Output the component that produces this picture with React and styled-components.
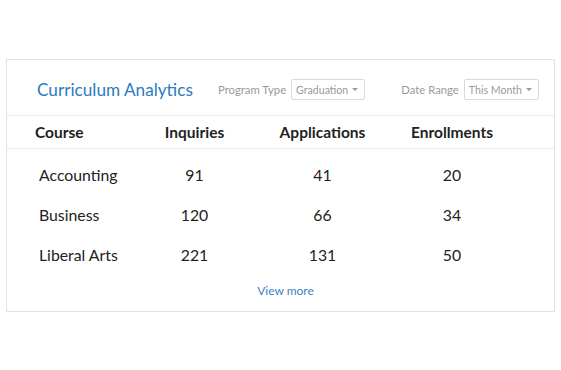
import React from 'react';
import styled, { createGlobalStyle } from 'styled-components';

const GlobalStyle = createGlobalStyle`
  html, body {
    margin: 0;
    padding: 0;
    background: #ffffff;
  }
  body {
    font-family: Lato, "Open Sans", "Liberation Sans", sans-serif;
    color: #222222;
  }
`;

const Page = styled.div`
  padding: 59px 6px 0 6px;
`;

const Card = styled.section`
  width: 547px;
  border: 1px solid #e3e3e3;
  background: #ffffff;
`;

const Header = styled.header`
  display: flex;
  align-items: center;
  height: 56px;
  padding: 4px 0 0 30px;
  box-sizing: border-box;
  border-bottom: 1px solid #ebebeb;
`;

const Title = styled.h2`
  margin: 0;
  width: 181px;
  font-size: 17.2px;
  font-weight: 400;
  color: #2b7bc0;
  white-space: nowrap;
`;

const Filter = styled.label`
  display: flex;
  align-items: center;
  gap: 5px;
  margin-left: ${(p) => p.$gap || 0}px;
  font-size: 11.3px;
  color: #9a9a9a;
  white-space: nowrap;
`;

const Select = styled.div`
  display: flex;
  align-items: center;
  gap: 4px;
  height: 19px;
  padding: 0 6px 0 4px;
  border: 1px solid #dadada;
  border-radius: 2px;
  color: #9a9a9a;
  font-size: 10.6px;
  white-space: nowrap;
`;

const Caret = styled.span`
  width: 0;
  height: 0;
  border-left: 3px solid transparent;
  border-right: 3px solid transparent;
  border-top: 3px solid #9a9a9a;
`;

const Row = styled.div`
  display: grid;
  grid-template-columns: 115px 89px 167px 92px;
  align-items: center;
  height: ${(p) => p.$height || 40}px;
  padding-left: 28px;
`;

const HeadRow = styled(Row)`
  border-bottom: 1px solid #ebebeb;
`;

const HeadCell = styled.div`
  font-size: 15.5px;
  font-weight: 700;
  color: #1f1f1f;
  text-align: ${(p) => (p.$first ? 'left' : 'center')};
`;

const Body = styled.div`
  padding-top: 5px;
`;

const Cell = styled.div`
  font-size: 15.8px;
  color: #222222;
  text-align: ${(p) => (p.$first ? 'left' : 'center')};
  padding-left: ${(p) => (p.$first ? 4 : 0)}px;
`;

const Footer = styled.div`
  display: flex;
  justify-content: center;
  padding: 9px 0 13px;
`;

const MoreLink = styled.a`
  font-size: 12px;
  color: #3d82c4;
  text-decoration: none;
  margin-left: 10px;
`;

const rows = [
  ['Accounting', 91, 41, 20],
  ['Business', 120, 66, 34],
  ['Liberal Arts', 221, 131, 50],
];

export default function App() {
  return (
    <>
      <GlobalStyle />
      <Page>
        <Card>
          <Header>
            <Title>Curriculum Analytics</Title>
            <Filter>
              Program Type
              <Select>
                Graduation <Caret />
              </Select>
            </Filter>
            <Filter $gap={36}>
              Date Range
              <Select>
                This Month <Caret />
              </Select>
            </Filter>
          </Header>
          <HeadRow $height={32}>
            <HeadCell $first>Course</HeadCell>
            <HeadCell>Inquiries</HeadCell>
            <HeadCell>Applications</HeadCell>
            <HeadCell>Enrollments</HeadCell>
          </HeadRow>
          <Body>
            {rows.map((r) => (
              <Row key={r[0]}>
                <Cell $first>{r[0]}</Cell>
                <Cell>{r[1]}</Cell>
                <Cell>{r[2]}</Cell>
                <Cell>{r[3]}</Cell>
              </Row>
            ))}
          </Body>
          <Footer>
            <MoreLink href="#">View more</MoreLink>
          </Footer>
        </Card>
      </Page>
    </>
  );
}
